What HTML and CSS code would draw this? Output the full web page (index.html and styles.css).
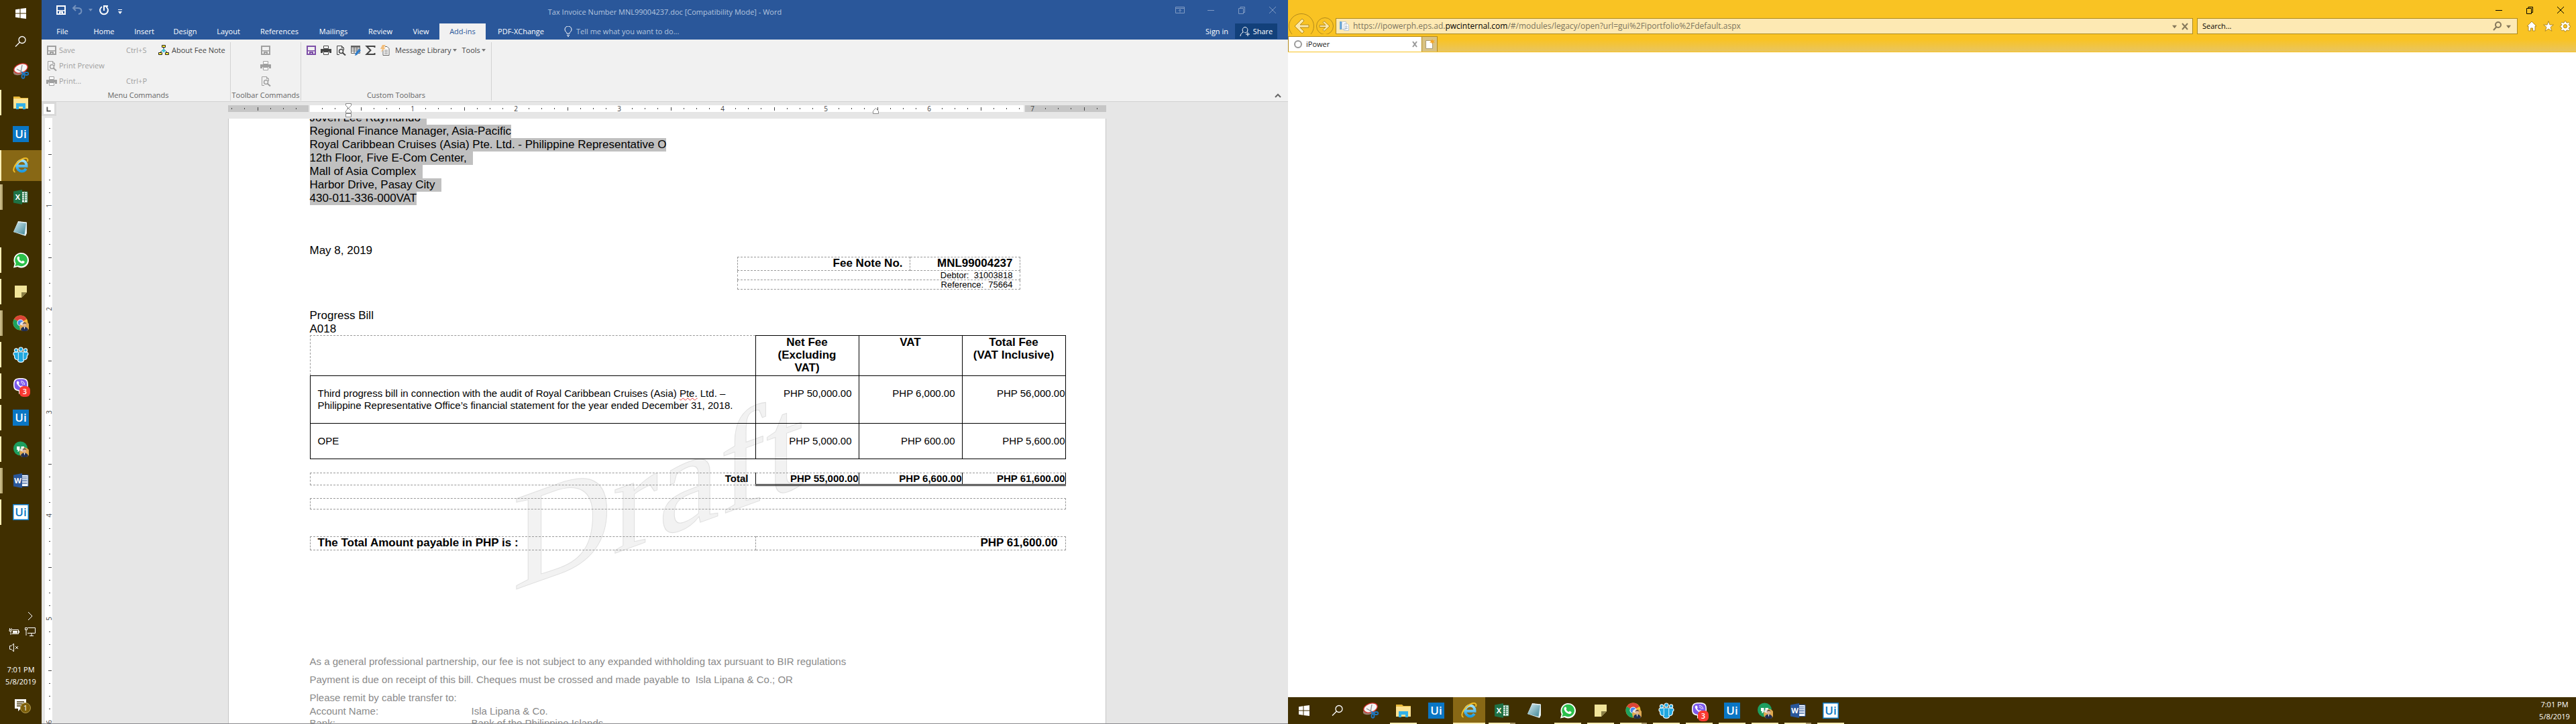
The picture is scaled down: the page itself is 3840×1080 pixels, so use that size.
FILE: index.html
```html
<!DOCTYPE html>
<html lang="en">
<head>
<meta charset="utf-8">
<title>Desktop</title>
<link rel="stylesheet" href="styles.css">
</head>
<body>
<svg class="defs" aria-hidden="true">
  <defs>
    <linearGradient id="g-ie" x1="0" y1="0" x2="0" y2="1"><stop offset="0" stop-color="#9fe4ff"/><stop offset="1" stop-color="#1d9be2"/></linearGradient>
    <linearGradient id="g-note" x1="0" y1="0" x2="1" y2="1"><stop offset="0" stop-color="#d9eef2"/><stop offset="1" stop-color="#3f8596"/></linearGradient>
    <symbol id="i-start" viewBox="0 0 24 24"><path fill="#fff" d="M4 6.300l6.500-1v6.200H4zM11.500 5.100L20 4v7.500h-8.500zM4 12.500h6.500v6.200L4 17.700zM11.500 12.500H20V20l-8.500-1.100z"/></symbol>
    <symbol id="i-search" viewBox="0 0 24 24"><g fill="none" stroke="#fff" stroke-width="1.300"><circle cx="14" cy="9.500" r="5"/><path d="M10.500 13L4 19.500"/></g></symbol>
    <symbol id="i-snip" viewBox="0 0 24 24"><ellipse cx="10.500" cy="12" rx="10" ry="5.500" fill="#9a7c70" transform="rotate(-20 10.500 12)"/><ellipse cx="12" cy="8" rx="10.500" ry="6.500" fill="#f6f6f6" stroke="#d8322f" stroke-width="1.300" transform="rotate(-20 12 8)"/><path d="M6 9l9 5M14 3l-2 11" stroke="#8b8f94" stroke-width="1.300"/><g fill="none" stroke="#1d78c4" stroke-width="1.800"><ellipse cx="15.500" cy="20" rx="2" ry="2.800"/><ellipse cx="20.500" cy="16" rx="3" ry="2"/><path d="M13 14l5 2M14 13l1.500 4"/></g></symbol>
    <symbol id="i-folder" viewBox="0 0 24 24"><path fill="#e9b93a" d="M1 3h9l2 2h11v5H1z"/><path fill="#fde393" d="M1 6h22v15H1z"/><path fill="#32b1e8" d="M5 22v-9h14v9h-4v-4H9v4z"/></symbol>
    <symbol id="i-ui" viewBox="0 0 24 24"><path fill="#0a76c4" d="M0 0h24v24H0z"/><text class="glyph glyph-ui" x="12" y="18" fill="#fff">Ui</text></symbol>
    <symbol id="i-ui-light" viewBox="0 0 24 24"><path fill="#0a76c4" d="M0 0h24v24H0z"/><path fill="#fff" d="M1.500 1.500h21v21h-21z"/><text class="glyph glyph-ui" x="12" y="18" fill="#0a76c4">Ui</text></symbol>
    <symbol id="i-ie" viewBox="0 0 24 24"><path fill="none" stroke="url(#g-ie)" stroke-width="4" d="M6.500 12.800H20.500C20.500 7.500 17.500 4.500 13.500 4.500S6 8 6 12.500s3.500 8 7.500 8c3 0 5-1.500 6.300-3.700"/><path fill="none" stroke="#f4bf26" stroke-width="1.900" d="M3.500 22C-1 20 2 11.500 9 5.500 14 1.200 20-.5 22 2.200c.8 1.200.5 2.600-.2 4"/></symbol>
    <symbol id="i-excel" viewBox="0 0 24 24"><path fill="#fff" stroke="#1f7245" d="M12 4h10v16H12z"/><path stroke="#1f7245" fill="none" stroke-width="1.200" d="M14 7h7M14 10h7M14 13h7M14 16h7M17.500 5v14"/><path fill="#1f7245" d="M1 3.500L14 1v22L1 20.500z"/><text class="glyph glyph-app" x="7.500" y="16">X</text></symbol>
    <symbol id="i-notepad" viewBox="0 0 24 24"><path fill="#e8f3f5" d="M8 1l13 1.500V19l-2 4L1 17z"/><path fill="url(#g-note)" d="M8 2l12 2-2.500 17L1 17z"/><path stroke="#e9f0f0" stroke-width="1.400" stroke-dasharray="1.500 1" d="M8 2l12 1.500"/></symbol>
    <symbol id="i-whatsapp" viewBox="0 0 24 24"><path fill="#fff" d="M1 23.500l1.700-6A11.300 11.300 0 1 1 7 22z"/><path fill="#2bc04b" d="M3.500 21l1.200-4.200A9.300 9.300 0 1 1 8 20z"/><path fill="#fff" d="M8.200 6.500c.8-.3 1.300 0 1.700 1.200.5 1.300.5 1.500-.3 2.500.8 1.700 2 2.900 4 3.800 1-1.200 1.200-1.400 2.400-.8 1.600.7 1.800.9 1.600 1.900-.4 1.800-2.500 2.300-4.300 1.700-3.300-1-5.600-3.300-6.700-6.300-.4-1.700.2-3.500 1.600-4z"/></symbol>
    <symbol id="i-sticky" viewBox="0 0 24 24"><path fill="#f1e49a" d="M3 3h18v10l-8 8H3z"/><path fill="#8c8048" d="M13 13h8l-8 8z"/></symbol>
    <symbol id="i-person" viewBox="0 0 24 24"><circle cx="17.500" cy="17" r="7.500" fill="#e0a951"/><path fill="#e9e4df" d="M10.500 14c1-4 4-4.500 6-4.500v7z"/><circle cx="17.500" cy="14.300" r="2.700" fill="#e0b59a"/><path fill="#3a2c26" d="M14.700 14c0-4 5.800-4 5.600 0l-1-1.400h-3.500z"/><path fill="#232f52" d="M12 22c.5-3.500 3-4.500 5.500-4.500S22.500 19 23 22c-3 3.500-8 3.500-11 0z"/><path fill="#fff" d="M16.500 17.500h2l-1 4z"/></symbol>
    <symbol id="i-chrome" viewBox="0 0 24 24"><circle cx="11.500" cy="11.500" r="11" fill="#f7c331"/><path fill="#db4437" d="M11.500 11.500L2 6A11 11 0 0 1 21 6z"/><path fill="#1da260" d="M2 6a11 11 0 0 0 8.500 16.500l4-7.500-3-3.500z"/><circle cx="11.500" cy="11.500" r="5" fill="#fff"/><circle cx="11.500" cy="11.500" r="4" fill="#4688f1"/><use href="#i-person"/></symbol>
    <symbol id="i-people" viewBox="0 0 24 24"><g fill="#20a8e0" stroke="#f2fbff" stroke-width="1.200"><path d="M1 11c0-2 1-3 4-3h14c3 0 4 1 4 3 0 1.500-.6 2-1.500 2 .2 4-.7 6-3 6.500l-2 .5c0 2-1.500 3.300-4.500 3.300S7.500 22 7.500 20l-2-.5c-2.300-.5-3.200-2.500-3-6.500C1.600 13 1 12.500 1 11z"/><circle cx="12" cy="4" r="3"/><circle cx="5" cy="5.500" r="2.600"/><circle cx="19" cy="5.500" r="2.600"/></g><path fill="none" stroke="#e4f6fd" d="M8.300 9v11M15.700 9v11"/></symbol>
    <symbol id="i-viber" viewBox="0 0 24 24"><path fill="#fff" d="M12 0c8 0 11 2 11 10s-3 10-9 10l-5 4v-4.500C3 18.500 1 16 1 10 1 2 4 0 12 0z"/><path fill="#7d5bec" d="M12 1.500c7 0 9.500 1.500 9.500 8.500s-2.500 8.500-8 8.500L10.500 21v-3c-6-.7-8-2.500-8-8 0-7 2.500-8.500 9.500-8.500z"/><path fill="#fff" d="M6.500 5c1-.8 1.700-.6 2.500.7.900 1.400.8 1.700-.1 2.700.5 1.800 1.500 3 3.300 3.700 1.200-1.200 1.500-1 3-.1 1.300.9 1.400 1.300.7 2.300C14.500 16 12 15 9.500 12.500 7 10 4.500 6.800 6.500 5z"/><path fill="none" stroke="#fff" d="M12 4.500c3.500 0 5.500 2 5.500 5.500M12 6.800c2 0 3.200 1.200 3.200 3.200"/></symbol>
    <symbol id="i-hangouts" viewBox="0 0 24 24"><circle cx="11.500" cy="11" r="10.500" fill="#1d9f60"/><path fill="#fff" d="M6 8h4.500v5L9 15.500H7L8 13H6zM12.500 8H17v5l-1.500 2.500h-2l1-2.500h-2z"/><use href="#i-person"/></symbol>
    <symbol id="i-word" viewBox="0 0 24 24"><path fill="#fff" stroke="#2a5699" d="M12 3.500h11v17H12z"/><path stroke="#2a5699" stroke-width="1.200" d="M14 6.500h7.500M14 9h7.500M14 11.500h7.500M14 14h7.500M14 16.500h7.500"/><path fill="#2a5699" d="M1 3.500L14 1v22L1 20.500z"/><text class="glyph glyph-app" x="7.500" y="16">W</text></symbol>
    <symbol id="i-save" viewBox="0 0 16 16"><path fill="none" stroke="currentColor" stroke-width="2" d="M2 2h12v12H2z"/><path fill="currentColor" d="M2 8h12v1.500H2zM5 10h6v4H9v-2H7v2H5z"/></symbol>
    <symbol id="i-preview" viewBox="0 0 16 16"><path fill="none" stroke="currentColor" d="M6 14.500H2.500v-13h7l3 3V8M9.500 1.500v3h3"/><circle cx="8.500" cy="9.500" r="3" fill="none" stroke="currentColor" stroke-width="1.500"/><path stroke="currentColor" stroke-width="2" d="M10.500 11.500L15 15.500"/></symbol>
    <symbol id="i-print" viewBox="0 0 16 16"><path fill="currentColor" d="M0 6h16v6h-3v-2H3v2H0z"/><path fill="#fff" stroke="currentColor" d="M4.500 1.500h7v4h-7zM4.500 10.500h7v4h-7z"/></symbol>
  </defs>
</svg>

<div class="desktop">
  <section class="monitor monitor-left">
    <nav class="taskbar taskbar-side" aria-label="Taskbar">
      <div class="tasks">
        <button class="task task-start" aria-label="Start"><svg><use href="#i-start"/></svg></button>
        <button class="task task-find" aria-label="Search"><svg><use href="#i-search"/></svg></button>
        <button class="task" aria-label="Snipping Tool"><svg><use href="#i-snip"/></svg></button>
        <button class="task open" aria-label="File Explorer"><svg><use href="#i-folder"/></svg></button>
        <button class="task" aria-label="UiPath"><svg><use href="#i-ui"/></svg></button>
        <button class="task open active" aria-label="Internet Explorer"><svg><use href="#i-ie"/></svg></button>
        <button class="task open stacked" aria-label="Excel"><svg><use href="#i-excel"/></svg></button>
        <button class="task" aria-label="Notepad"><svg><use href="#i-notepad"/></svg></button>
        <button class="task open" aria-label="WhatsApp"><svg><use href="#i-whatsapp"/></svg></button>
        <button class="task open" aria-label="Sticky Notes"><svg><use href="#i-sticky"/></svg></button>
        <button class="task open stacked" aria-label="Chrome"><svg><use href="#i-chrome"/></svg></button>
        <button class="task open" aria-label="Teams"><svg><use href="#i-people"/></svg></button>
        <button class="task open" aria-label="Viber"><svg><use href="#i-viber"/></svg><span class="count">3</span></button>
        <button class="task open" aria-label="UiPath Studio"><svg><use href="#i-ui"/></svg></button>
        <button class="task open" aria-label="Hangouts"><svg><use href="#i-hangouts"/></svg></button>
        <button class="task open stacked" aria-label="Word"><svg><use href="#i-word"/></svg></button>
        <button class="task open" aria-label="UiPath Robot"><svg><use href="#i-ui-light"/></svg></button>
      </div>
      <div class="tray">
        <button class="tray-more" aria-label="Show hidden icons"><svg viewBox="0 0 16 16"><path d="M5 2l6 6-6 6"/></svg></button>
        <div class="tray-icons">
          <button aria-label="Battery"><svg viewBox="0 0 16 16"><path d="M5 5.500h9.500v6H4.500M3 8v5M1 5.500h3v2H1zM1.500 3v2M4 3v2"/><path class="solid" d="M6 7h7v3.500H6zM15 7h1v3h-1z"/></svg></button>
          <button aria-label="Network"><svg viewBox="0 0 16 16"><path d="M4.500 2.500h11v8H4M10 11v3M7 14.500h6M.5 2.500h3v3h-3zM2 6v8"/></svg></button>
          <button aria-label="Volume muted"><svg viewBox="0 0 16 16"><path d="M1.500 5.500H4L7.500 2v12L4 10.500H1.500zM10 6l4 4M14 6l-4 4"/></svg></button>
        </div>
        <button class="clock"><span>7:01 PM</span><span>5/8/2019</span></button>
        <button class="notices" aria-label="Notifications"><svg viewBox="0 0 24 24"><path fill="#fff" d="M3 2h17v14h-8l-4 4v-4H3z"/><path stroke="#402f00" stroke-width="1.500" d="M6 6h11M6 9h11M6 12h7"/></svg><span class="notice-count">1</span></button>
      </div>
    </nav>

    <main class="word">
      <header class="titlebar">
        <div class="quick">
          <button aria-label="Save"><svg viewBox="0 0 16 16"><use href="#i-save"/></svg></button>
          <button class="faded" aria-label="Undo"><svg viewBox="0 0 16 16"><path class="line" d="M2 5h7c7 0 7 8 1 9M6 1L2 5l4 4"/></svg></button>
          <button class="faded narrow" aria-label="Undo options"><svg viewBox="0 0 8 8"><path class="solid" d="M1 2h6L4 6z"/></svg></button>
          <button aria-label="Redo"><svg viewBox="0 0 16 16"><path class="line" d="M5 3a6 6 0 1 0 6 0M8 9V2h6"/></svg></button>
          <button aria-label="Customize"><svg viewBox="0 0 16 16"><path class="solid" d="M5 7h6v1H5zM5 10h6l-3 4z"/></svg></button>
        </div>
        <h1 class="caption">Tax Invoice Number MNL99004237.doc [Compatibility Mode] - Word</h1>
        <div class="controls faded">
          <button aria-label="Ribbon options"><svg viewBox="0 0 16 16"><path d="M1.500 3.500h13v9h-13zM1.500 5.500h13M8 11.500v-4M6 9l2-2 2 2"/></svg></button>
          <button aria-label="Minimize"><svg viewBox="0 0 16 16"><path d="M3 8.500h10"/></svg></button>
          <button aria-label="Restore"><svg viewBox="0 0 16 16"><path d="M3.500 5.500h7v8h-7zM6 5V3.500h6.500v8H11"/></svg></button>
          <button aria-label="Close"><svg viewBox="0 0 16 16"><path d="M3 3l10 10M13 3L3 13"/></svg></button>
        </div>
      </header>
      <div class="tabrow">
        <nav class="tabs" aria-label="Ribbon tabs">
          <button>File</button><button>Home</button><button>Insert</button><button>Design</button><button>Layout</button><button>References</button><button>Mailings</button><button>Review</button><button>View</button><button class="current">Add-ins</button><button>PDF-XChange</button>
        </nav>
        <button class="tell"><svg viewBox="0 0 16 16"><path d="M6 11c0-2-3-3-3-6a5 5 0 0 1 10 0c0 3-3 4-3 6zM6 13.500h4M7 15.500h2"/></svg>Tell me what you want to do...</button>
        <button class="signin">Sign in</button>
        <button class="share"><svg viewBox="0 0 16 16"><path d="M1 15c0-3 2-5 4.500-6C3 7 4 1.500 8 1.500s5 5.500 2.500 7.500C9 10 8 10 7 9M12 9v6M9 12h6"/></svg>Share</button>
      </div>

      <div class="ribbon">
        <section class="group group-menu">
          <div class="commands">
            <button disabled><svg><use href="#i-save"/></svg><span>Save</span><kbd>Ctrl+S</kbd></button>
            <button disabled><svg><use href="#i-preview"/></svg><span>Print Preview</span></button>
            <button disabled><svg><use href="#i-print"/></svg><span>Print...</span><kbd>Ctrl+P</kbd></button>
          </div>
          <button class="about"><svg viewBox="0 0 16 16"><path stroke="#222" fill="none" d="M8 4v3M3 11l3-3h4l3 3"/><path fill="#3bc4d8" d="M8 5.500l3 3-3 3-3-3z"/><path fill="#ffee32" stroke="#222" d="M5.500 .5h5v3h-5zM.500 11.500h5v3h-5zM10.500 11.500h5v3h-5z"/></svg>About Fee Note</button>
          <h2>Menu Commands</h2>
        </section>
        <section class="group group-toolbar">
          <div class="stack">
            <button disabled aria-label="Save"><svg><use href="#i-save"/></svg></button>
            <button disabled aria-label="Print"><svg><use href="#i-print"/></svg></button>
            <button disabled aria-label="Preview"><svg><use href="#i-preview"/></svg></button>
          </div>
          <h2>Toolbar Commands</h2>
        </section>
        <section class="group group-custom">
          <div class="strip">
            <button class="violet" aria-label="Save"><svg><use href="#i-save"/></svg></button>
            <button aria-label="Print"><svg><use href="#i-print"/></svg></button>
            <button aria-label="Preview"><svg><use href="#i-preview"/></svg></button>
            <button aria-label="Edit table"><svg viewBox="0 0 16 16"><path fill="none" stroke="#666" d="M1.500 1.500h13v11h-13zM1.500 6h13M1.500 9h13M6 2v11M10 2v11"/><path fill="#666" d="M1 1h14v3H1z"/><path fill="#2f7cc9" d="M13 6l3 2-6 7-3 1 1-4z"/></svg></button>
            <button aria-label="Sum"><svg viewBox="0 0 16 16"><path fill="none" stroke="#444" stroke-width="2" d="M14.500 4V2H2.500l6 6-6 6h12v-2"/></svg></button>
            <button aria-label="Quick document"><svg viewBox="0 0 16 16"><path fill="#fff" stroke="#666" d="M5 8v7.500h9v-10l-3-3H8"/><path stroke="#777" d="M7 8h5M7 10.500h5M7 13h5"/><path fill="#f2bd7a" d="M4 0h5L6 4h3L2 11l2-5H1z"/></svg></button>
            <button class="menu">Message Library<svg class="caret" viewBox="0 0 8 8"><path d="M1 2h6L4 6z"/></svg></button>
            <button class="menu">Tools<svg class="caret" viewBox="0 0 8 8"><path d="M1 2h6L4 6z"/></svg></button>
          </div>
          <h2>Custom Toolbars</h2>
        </section>
        <button class="collapse" aria-label="Collapse ribbon"><svg viewBox="0 0 16 16"><path d="M4 10l4-4 4 4"/></svg></button>
      </div>

      <div class="workspace">
        <button class="tabstop" aria-label="Tab selector"><svg viewBox="0 0 16 16"><path d="M5 4v7h6"/></svg></button>
        <div class="ruler-lane">
          <svg class="ruler" aria-hidden="true">
            <defs><pattern id="inch" x="121" y="0" width="154" height="10" patternUnits="userSpaceOnUse"><path fill="#444" d="M19 4h1v2h-1zM38 4h1v2h-1zM57 4h1v2h-1zM77 3h1v5h-1zM96 4h1v2h-1zM115 4h1v2h-1zM134 4h1v2h-1z"/></pattern></defs>
            <path fill="#fff" d="M122 0h1064v10H122z"/><path fill="#c6c6c6" d="M0 0h120v10H0zM1188 0h121v10H1188z"/>
            <path fill="url(#inch)" d="M0 0h1309v10H0z"/>
            <g class="numbers"><text x="275" y="9">1</text><text x="429" y="9">2</text><text x="583" y="9">3</text><text x="737" y="9">4</text><text x="891" y="9">5</text><text x="1045" y="9">6</text><text x="1199" y="9">7</text></g>
            <path class="marker" d="M175.500-2.500h8v3l-4 4-4-4zM179.500 4.500l4 4v3h-8v-3zM175.500 12.500h8v5h-8zM961.500 12.500h8v-4l-4-4-4 4z"/>
          </svg>
        </div>
        <div class="side-ruler">
          <svg aria-hidden="true">
            <defs><pattern id="inch-v" x="0" y="-23" width="12" height="154" patternUnits="userSpaceOnUse"><path fill="#444" d="M6 19h2v1H6zM6 38h2v1H6zM6 57h2v1H6zM5 77h5v1H5zM6 96h2v1H6zM6 115h2v1H6zM6 134h2v1H6z"/></pattern></defs>
            <rect width="100%" height="100%" fill="url(#inch-v)"/>
            <g class="numbers"><text transform="translate(10 131) rotate(-90)">1</text><text transform="translate(10 285) rotate(-90)">2</text><text transform="translate(10 439) rotate(-90)">3</text><text transform="translate(10 593) rotate(-90)">4</text><text transform="translate(10 747) rotate(-90)">5</text><text transform="translate(10 901) rotate(-90)">6</text></g>
          </svg>
        </div>
        <div class="canvas">
          <article class="page">
            <svg class="watermark" viewBox="0 0 500 400" aria-hidden="true"><text x="0" y="0" transform="translate(10 350) skewY(-20)">Draft</text></svg>
            <div class="sheet">
              <address><span>Joven Lee Raymundo&nbsp;&nbsp;</span><span>Regional Finance Manager, Asia-Pacific</span><span>Royal Caribbean Cruises (Asia) Pte. Ltd. - Philippine Representative O</span><span>12th Floor, Five E-Com Center,&nbsp;&nbsp;</span><span>Mall of Asia Complex&nbsp;&nbsp;</span><span>Harbor Drive, Pasay City&nbsp;&nbsp;</span><span>430-011-336-000VAT</span></address>
              <p class="date">May 8, 2019</p>
              <table class="meta">
                <colgroup><col class="c-label"><col class="c-value"></colgroup>
                <tr><th>Fee Note No.</th><th>MNL99004237</th></tr>
                <tr class="small"><td colspan="2">Debtor:&nbsp; 31003818</td></tr>
                <tr class="small"><td colspan="2">Reference:&nbsp; 75664</td></tr>
              </table>
              <p class="subject">Progress Bill<br>A018</p>
              <table class="fees">
                <colgroup><col><col class="c-money"><col class="c-money"><col class="c-money"></colgroup>
                <thead><tr><td class="blank"></td><th>Net Fee (Excluding VAT)</th><th>VAT</th><th>Total Fee<br>(VAT Inclusive)</th></tr></thead>
                <tbody>
                  <tr class="row-bill"><td>Third progress bill in connection with the audit of Royal Caribbean Cruises (Asia) <span class="typo">Pte.</span> Ltd. –<br>Philippine Representative Office’s financial statement for the year ended December 31, 2018.</td><td>PHP 50,000.00</td><td>PHP 6,000.00</td><td>PHP 56,000.00</td></tr>
                  <tr class="row-ope"><td>OPE</td><td>PHP 5,000.00</td><td>PHP 600.00</td><td>PHP 5,600.00</td></tr>
                </tbody>
              </table>
              <table class="totals">
                <colgroup><col><col class="c-money"><col class="c-money"><col class="c-money"></colgroup>
                <tr><th>Total</th><td>PHP 55,000.00</td><td>PHP 6,600.00</td><td>PHP 61,600.00</td></tr>
              </table>
              <div class="spare"></div>
              <table class="payable">
                <colgroup><col><col class="c-due"></colgroup>
                <tr><th>The Total Amount payable in PHP is :</th><td>PHP 61,600.00</td></tr>
              </table>
              <footer class="terms">
                <p>As a general professional partnership, our fee is not subject to any expanded withholding tax pursuant to BIR regulations</p>
                <p>Payment is due on receipt of this bill. Cheques must be crossed and made payable to&nbsp; Isla Lipana &amp; Co.; OR</p>
                <p>Please remit by cable transfer to:</p>
                <dl><dt>Account Name:</dt><dd>Isla Lipana &amp; Co.</dd><dt>Bank:</dt><dd>Bank of the Philippine Islands</dd></dl>
              </footer>
            </div>
          </article>
        </div>
      </div>
    </main>
  </section>

  <section class="monitor monitor-right">
    <div class="browser">
      <header class="chrome">
        <div class="controls dark">
          <button aria-label="Minimize"><svg viewBox="0 0 16 16"><path d="M3 8.500h10"/></svg></button>
          <button aria-label="Restore"><svg viewBox="0 0 16 16"><path d="M3.500 5.500h7v8h-7zM6 5V3.500h6.500v8H11"/></svg></button>
          <button aria-label="Close"><svg viewBox="0 0 16 16"><path d="M3 3l10 10M13 3L3 13"/></svg></button>
        </div>
        <div class="navrow">
          <button class="back" aria-label="Back"><svg viewBox="0 0 40 40"><circle cx="20" cy="20" r="18.500"/><path d="M31 18v4H18l6 6-3 3-11-11L21 9l3 3-6 6z"/></svg></button>
          <button class="forward" aria-label="Forward"><svg viewBox="0 0 28 28"><circle cx="14" cy="14" r="12.500"/><path d="M6 12.500v3h9l-4 4 2 2 8-7.500-8-7.500-2 2 4 4z"/></svg></button>
          <div class="address">
            <svg viewBox="0 0 16 16"><path fill="#6aa7d6" d="M1 1h3v12H1z"/><path fill="#fff" stroke="#b9c6d2" d="M4.500 1.500h6v11h-6zM7.500 4.500h5l2 2v8h-7z"/><path stroke="#9fb4c6" d="M9 9h4M9 11.500h4"/></svg>
            <div class="url" role="textbox" contenteditable="true" spellcheck="false" aria-label="Address">https://ipowerph.eps.ad.<b>pwcinternal.com</b>/#/modules/legacy/open?url=gui%2Fiportfolio%2Fdefault.aspx</div>
            <button aria-label="Address list"><svg viewBox="0 0 8 8"><path class="solid" d="M0 2h8L4 7z"/></svg></button>
            <button class="stop" aria-label="Stop"><svg viewBox="0 0 16 16"><path d="M4 4l8 9M12 4l-8 9"/></svg></button>
          </div>
          <div class="search">
            <input type="search" placeholder="Search..." aria-label="Search">
            <button class="stop" aria-label="Go"><svg viewBox="0 0 16 16"><circle cx="9" cy="6" r="4"/><path d="M6.500 9L2 14"/></svg></button>
            <button aria-label="Search providers"><svg viewBox="0 0 8 8"><path class="solid" d="M0 2h8L4 7z"/></svg></button>
          </div>
          <div class="tools">
            <button aria-label="Home"><svg viewBox="0 0 16 16"><path d="M8 1l7 7h-2v7h-3.500v-4h-3v4H3V8H1z"/></svg></button>
            <button aria-label="Favorites"><svg viewBox="0 0 16 16"><path d="M8 .500l2 5.500h5.500l-4.500 3.500 2 6L8 12l-5 3.500 2-6L.500 6H6z"/></svg></button>
            <button aria-label="Tools"><svg viewBox="0 0 16 16"><path fill-rule="evenodd" d="M7 .500h2l.5 2 1.500.7 2-1.200 1.500 1.600-1.200 1.900.6 1.500 1.600.5v2l-1.600.5-.6 1.500 1.200 2L13 15l-2-1.200-1.500.7-.5 1.500H7l-.5-1.500-1.500-.7L3 15l-1.500-1.500 1.200-2L2.100 10 .500 9.500v-2L2.100 7l.6-1.500-1.200-2L3 2l2 1.200 1.500-.7zM8 5.500a2.700 2.700 0 1 0 0 5.400 2.700 2.700 0 0 0 0-5.400z"/></svg></button>
          </div>
        </div>
        <div class="pagetabs">
          <div class="pagetab"><svg viewBox="0 0 16 16"><circle cx="8" cy="8" r="5"/></svg><a href="#ipower">iPower</a><button aria-label="Close tab"><svg viewBox="0 0 16 16"><path d="M5 4l6 8M11 4l-6 8"/></svg></button></div>
          <button class="newtab" aria-label="New tab"><svg viewBox="0 0 16 16"><path fill="#fff" stroke="#a89a78" d="M2.500 2.500h10v12h-10z"/><path fill="#f5a623" d="M12 0l1 2.500 3-.5-2 2 2 2-3-.5-1 2.500-1-2.500-3 .5 2-2-2-2 3 .5z"/></svg></button>
        </div>
      </header>
      <div class="viewport" id="ipower"></div>
    </div>
    <nav class="taskbar taskbar-bottom" aria-label="Second taskbar">
      <div class="tasks">
        <button class="task task-start" aria-label="Start"><svg><use href="#i-start"/></svg></button>
        <button class="task task-find" aria-label="Search"><svg><use href="#i-search"/></svg></button>
        <button class="task" aria-label="Snipping Tool"><svg><use href="#i-snip"/></svg></button>
        <button class="task open" aria-label="File Explorer"><svg><use href="#i-folder"/></svg></button>
        <button class="task" aria-label="UiPath"><svg><use href="#i-ui"/></svg></button>
        <button class="task open active" aria-label="Internet Explorer"><svg><use href="#i-ie"/></svg></button>
        <button class="task open stacked" aria-label="Excel"><svg><use href="#i-excel"/></svg></button>
        <button class="task" aria-label="Notepad"><svg><use href="#i-notepad"/></svg></button>
        <button class="task open" aria-label="WhatsApp"><svg><use href="#i-whatsapp"/></svg></button>
        <button class="task open" aria-label="Sticky Notes"><svg><use href="#i-sticky"/></svg></button>
        <button class="task open stacked" aria-label="Chrome"><svg><use href="#i-chrome"/></svg></button>
        <button class="task open" aria-label="Teams"><svg><use href="#i-people"/></svg></button>
        <button class="task open" aria-label="Viber"><svg><use href="#i-viber"/></svg><span class="count">3</span></button>
        <button class="task open" aria-label="UiPath Studio"><svg><use href="#i-ui"/></svg></button>
        <button class="task open" aria-label="Hangouts"><svg><use href="#i-hangouts"/></svg></button>
        <button class="task open stacked" aria-label="Word"><svg><use href="#i-word"/></svg></button>
        <button class="task open" aria-label="UiPath Robot"><svg><use href="#i-ui-light"/></svg></button>
      </div>
      <button class="clock"><span>7:01 PM</span><span>5/8/2019</span></button>
    </nav>
  </section>
</div>
</body>
</html>
```
FILE: styles.css
```css
* { box-sizing: border-box; }

body {
  margin: 0;
  font: 11px/16px "Open Sans", "Noto Sans", sans-serif;
  color: #444;
  overflow: hidden;
}

button {
  display: flex;
  align-items: center;
  justify-content: center;
  flex: none;
  padding: 0;
  border: 0;
  background: none;
  color: inherit;
  font: inherit;
  white-space: nowrap;
}

svg { display: block; flex: none; width: 16px; height: 16px; }
.defs { position: absolute; width: 0; height: 0; }
h1, h2, p, dl, dd { margin: 0; font: inherit; }

.glyph { font-family: "Open Sans", sans-serif; font-weight: 600; text-anchor: middle; }
.glyph-ui { font-size: 17px; }
.glyph-app { font-size: 11px; font-weight: 700; fill: #fff; }

.desktop { display: grid; grid-template-columns: 1fr 1fr; height: 100vh; }
.monitor { display: flex; min-width: 0; min-height: 0; }
.monitor-right { flex-direction: column; }

/* Taskbars */
.taskbar { display: flex; justify-content: space-between; flex: none; background: #402f00; color: #fff; }
.taskbar-side { flex-direction: column; width: 62px; }
.taskbar-bottom { height: 40px; }
.tasks { display: flex; gap: 1px; }
.taskbar-side .tasks { flex-direction: column; }
.task { position: relative; width: 48px; height: 40px; }
.taskbar-side .task { width: 62px; height: 46px; }
.taskbar-side .task-start { height: 40px; }
.taskbar-side .task-find { height: 41px; }
.taskbar-bottom .task-find { width: 49px; }
.task svg { width: 24px; height: 24px; }
.task.active { background: #886815; }
.task.open::before { content: ""; position: absolute; background: #ffefb5; }
.taskbar-side .open::before { left: 0; top: 4px; width: 2px; height: 38px; }
.taskbar-bottom .open::before { left: 4px; bottom: 0; width: 40px; height: 2px; }
.taskbar-side .active::before { top: 0; height: 46px; }
.taskbar-bottom .active::before { left: 0; width: 48px; }
.taskbar-side .stacked::before { width: 4px; background: linear-gradient(90deg, #c9bb88 50%, #b3a470 50%); }
.taskbar-bottom .stacked::before { background: linear-gradient(90deg, #ffefb5 80%, #a8986a 80%); }
.count {
  position: absolute;
  left: 50%;
  top: 50%;
  width: 16px;
  height: 16px;
  margin-left: -2px;
  border-radius: 6px;
  background: #fb3a32;
  text-align: center;
  font-weight: 600;
}

.tray { display: flex; flex-direction: column; align-items: center; }
.tray svg { fill: none; stroke: #fff; }
.tray .solid { fill: #fff; stroke: none; }
.tray-more { align-self: flex-end; margin-right: 9px; height: 22px; }
.tray-icons { display: grid; grid-template-columns: 24px 24px; align-self: start; margin-left: 9px; }
.tray-icons button { height: 24px; }
.clock { flex-direction: column; line-height: 18px; }
.tray .clock { margin-top: 12px; }
.taskbar-bottom .clock { margin-right: 8px; width: 48px; }
.notices { position: relative; width: 62px; height: 54px; }
.tray .notices svg { width: 24px; height: 24px; stroke: none; }
.notice-count {
  position: absolute;
  left: 30px;
  top: 22px;
  width: 16px;
  height: 16px;
  border: 1px solid #b09a50;
  border-radius: 8px;
  background: #7d5f0a;
  line-height: 14px;
}

/* Word window */
.word { display: flex; flex-direction: column; flex: 1; min-width: 0; border-bottom: 1px solid #8a8a8e; }
.titlebar { display: grid; grid-template-columns: 1fr auto 1fr; align-items: start; height: 35px; background: #2a579a; color: #fff; }
.quick { display: flex; gap: 8px; padding: 7px 0 0 21px; }
.quick .narrow { width: 8px; }
.quick .narrow svg { width: 8px; height: 8px; }
.quick .line { fill: none; stroke: currentColor; stroke-width: 2; }
.quick .solid { fill: currentColor; }
.quick .faded { opacity: 0.35; }
.caption { padding-top: 10px; color: #b4c5df; }
.controls { display: flex; justify-content: flex-end; }
.controls button { width: 46px; height: 30px; }
.controls svg { fill: none; stroke: currentColor; }
.controls.faded { color: #7f9ac3; }

.tabrow { display: flex; height: 24px; background: #2a579a; color: #fff; }
.tabs { display: grid; grid-template-columns: 62px 62px 58px 64px 65px 87px 74px 66px 55px 69px 105px; }
.tabs .current { background: #f1f1f1; color: #2a579a; }
.tell { flex: 1; justify-content: flex-start; gap: 4px; padding-left: 10px; color: #b4c5df; }
.tell svg, .share svg { fill: none; stroke: #fff; }
.signin { padding: 0 10px; }
.share { width: 63px; height: 23px; gap: 4px; margin-right: 16px; background: #12407a; }

.ribbon { display: flex; height: 93px; padding-top: 4px; border-bottom: 1px solid #d2d2d2; background: #f1f1f1; }
.group { display: grid; grid-template-rows: 1fr 16px; margin-bottom: 1px; border-right: 1px solid #d2d2d2; }
.group h2 { grid-column: 1 / -1; color: #666; text-align: center; }
.group button:disabled { color: #a0a0a0; }
.group-menu { grid-template-columns: 167px 1fr; width: 282px; padding-left: 7px; }
.commands button { display: grid; grid-template-columns: 16px 1fr 36px; gap: 3px; width: 155px; height: 23px; text-align: left; }
.commands kbd { font: inherit; }
.about { align-self: start; justify-content: flex-start; gap: 4px; height: 23px; }
.group-toolbar { width: 105px; }
.stack button { width: 104px; height: 23px; }
.group-custom { width: 284px; }
.strip { display: flex; align-items: flex-start; gap: 6px; padding-left: 7px; }
.strip button { height: 23px; }
.strip .menu { gap: 1px; padding-left: 1px; }
.strip .caret { width: 8px; height: 8px; fill: #777; }
.violet { color: #7e4fa8; }
.collapse { margin: auto 7px 0 auto; }
.collapse svg { fill: none; stroke: #666; stroke-width: 2; }

.workspace {
  display: grid;
  grid-template-columns: 22px 1fr;
  grid-template-rows: 24px 1fr;
  flex: 1;
  min-height: 0;
  background: #e6e6e6;
}
.tabstop { width: 22px; height: 21px; border: 3px solid #d9d9d9; background: #fff; }
.tabstop svg { width: 14px; height: 14px; fill: none; stroke: #555; stroke-width: 2; }
.ruler-lane { padding: 5px 16px 0 0; position: relative; z-index: 1; }
.ruler { width: 1309px; max-width: 100%; height: 10px; margin: 0 auto; overflow: visible; }
.numbers { font: 10px "Open Sans", sans-serif; fill: #444; text-anchor: middle; }
.marker { fill: #fff; stroke: #888; }
.side-ruler { padding-left: 5px; }
.side-ruler svg { width: 11px; height: 100%; background: #fff; overflow: visible; }
.canvas { min-height: 0; overflow: hidden; padding: 1px 16px 0 0; }

/* Invoice */
.page {
  position: relative;
  z-index: 0;
  overflow: hidden;
  max-width: 1309px;
  height: 100%;
  margin: 0 auto;
  border: solid #c6c6c6;
  border-width: 0 1px;
  background: #fff;
  color: #000;
  font: 17px/20px "Liberation Sans", Arial, sans-serif;
}
.watermark { position: absolute; z-index: -1; left: 413px; top: 354px; width: 500px; height: 400px; overflow: visible; }
.watermark text { font: 206px "Liberation Serif", serif; fill: #f2f2f2; stroke: #dfdfdf; stroke-width: 1; }
.sheet { margin-top: -11px; padding: 0 59px 0 121px; }
address { display: flex; flex-direction: column; align-items: flex-start; font-style: normal; }
address span { background: #c0c0c0; }
.date { margin-top: 58px; }
table { border-collapse: collapse; table-layout: fixed; width: 100%; }
th, td { padding: 0; vertical-align: top; }
.meta { width: 422px; margin: -1px 68px 0 auto; text-align: right; }
.meta th, .meta td { height: 20px; padding-right: 10px; border: 1px dashed #999; line-height: 18px; }
.meta .small td { height: 14px; font-size: 13px; line-height: 13px; }
.c-value { width: 164px; }
.subject { margin-top: 29px; }
.c-money { width: 154px; }
.fees { margin-top: -1px; }
.fees td, .fees th { border: 1px solid #000; }
.fees th { height: 60px; padding: 0 24px; line-height: 19px; }
.fees th:last-child { padding: 0; }
.fees .blank { border-top: 1px dashed #999; border-left: 1px dashed #999; }
.fees tbody { font-size: 15px; line-height: 18px; }
.fees tbody td { padding: 17px 10px; text-align: right; }
.fees tbody td:first-child { padding-left: 11px; text-align: left; white-space: nowrap; }
.fees tbody td:last-child { padding-right: 0; }
.row-bill td { height: 70px; }
.row-ope td { height: 53px; }
.typo { text-decoration: underline wavy #e33 1px; }
.totals { margin-top: 20px; font-size: 15px; line-height: 16px; font-weight: 700; text-align: right; }
.totals th { height: 18px; padding-right: 10px; border: 1px dashed #999; }
.totals td { border: 1px solid #000; border-top: 1px dashed #999; border-bottom: 3px double #000; }
.spare { height: 17px; margin-top: 18px; border: 1px dashed #999; }
.payable { margin-top: 40px; }
.payable th, .payable td { height: 20px; padding: 0 11px; border: 1px dashed #999; line-height: 18px; text-align: left; }
.payable td { font-weight: 700; text-align: right; }
.c-due { width: 462px; }
.terms { margin-top: 157px; color: #8a8a8a; font-size: 15px; line-height: 18px; }
.terms p { margin-bottom: 9px; }
.terms p:nth-of-type(3) { margin-bottom: 2px; }
.terms dl { display: grid; grid-template-columns: 241px 1fr; }

/* Browser window */
.browser { display: flex; flex-direction: column; flex: 1; background: #fff; }
.chrome { background: #f9c323; }
.chrome .controls { height: 27px; color: #000; }
.navrow { display: flex; align-items: center; height: 24px; }
.back { margin: -10px 0; }
.back svg { width: 40px; height: 40px; }
.forward { margin: -4px 2px -4px 1px; }
.forward svg { width: 28px; height: 28px; }
.back svg, .forward svg { fill: none; stroke: #b38a1c; }
.back path, .forward path { fill: #fde9a8; }
.address, .search { display: flex; align-items: center; height: 24px; border: 1px solid #ad8a1e; background: #fde9b3; }
.address { flex: 1; padding: 0 3px 0 4px; }
.url { flex: 1; margin-left: 5px; color: #7c755f; font-size: 12px; white-space: nowrap; }
.url b { color: #000; font-weight: 400; }
.address button, .search button { width: 16px; height: 22px; }
.address button svg, .search button svg { width: 7px; height: 7px; fill: #84775a; }
.address .stop svg, .search .stop svg { width: 16px; height: 16px; fill: none; stroke: #84775a; stroke-width: 2; }
.search { width: 478px; margin-left: 6px; padding: 0 5px 0 7px; }
.search input { flex: 1; min-width: 0; padding: 0; border: 0; background: none; font: inherit; color: #000; }
.search input::placeholder { color: #000; opacity: 1; }
.tools { display: flex; gap: 9px; margin: 0 8px 0 13px; }
.tools svg { fill: #fff; stroke: #b58c22; stroke-width: 1; overflow: visible; }
.pagetabs { position: relative; display: flex; height: 27px; padding-top: 3px; border-bottom: 1px solid #f9c323; background: linear-gradient(#f9c323 30%, #e8c560); }
.pagetab { display: flex; align-items: center; gap: 4px; width: 200px; padding: 0 2px 0 6px; border: 1px solid #b38a1c; border-bottom: 0; background: #fff; }
.pagetab a { flex: 1; color: #222; text-decoration: none; }
.pagetab svg { fill: none; stroke: #999; stroke-width: 2; }
.newtab { width: 23px; border: 1px solid #b38a1c; border-width: 1px 1px 0 0; background: #d9c283; }
.viewport { flex: 1; }
```
